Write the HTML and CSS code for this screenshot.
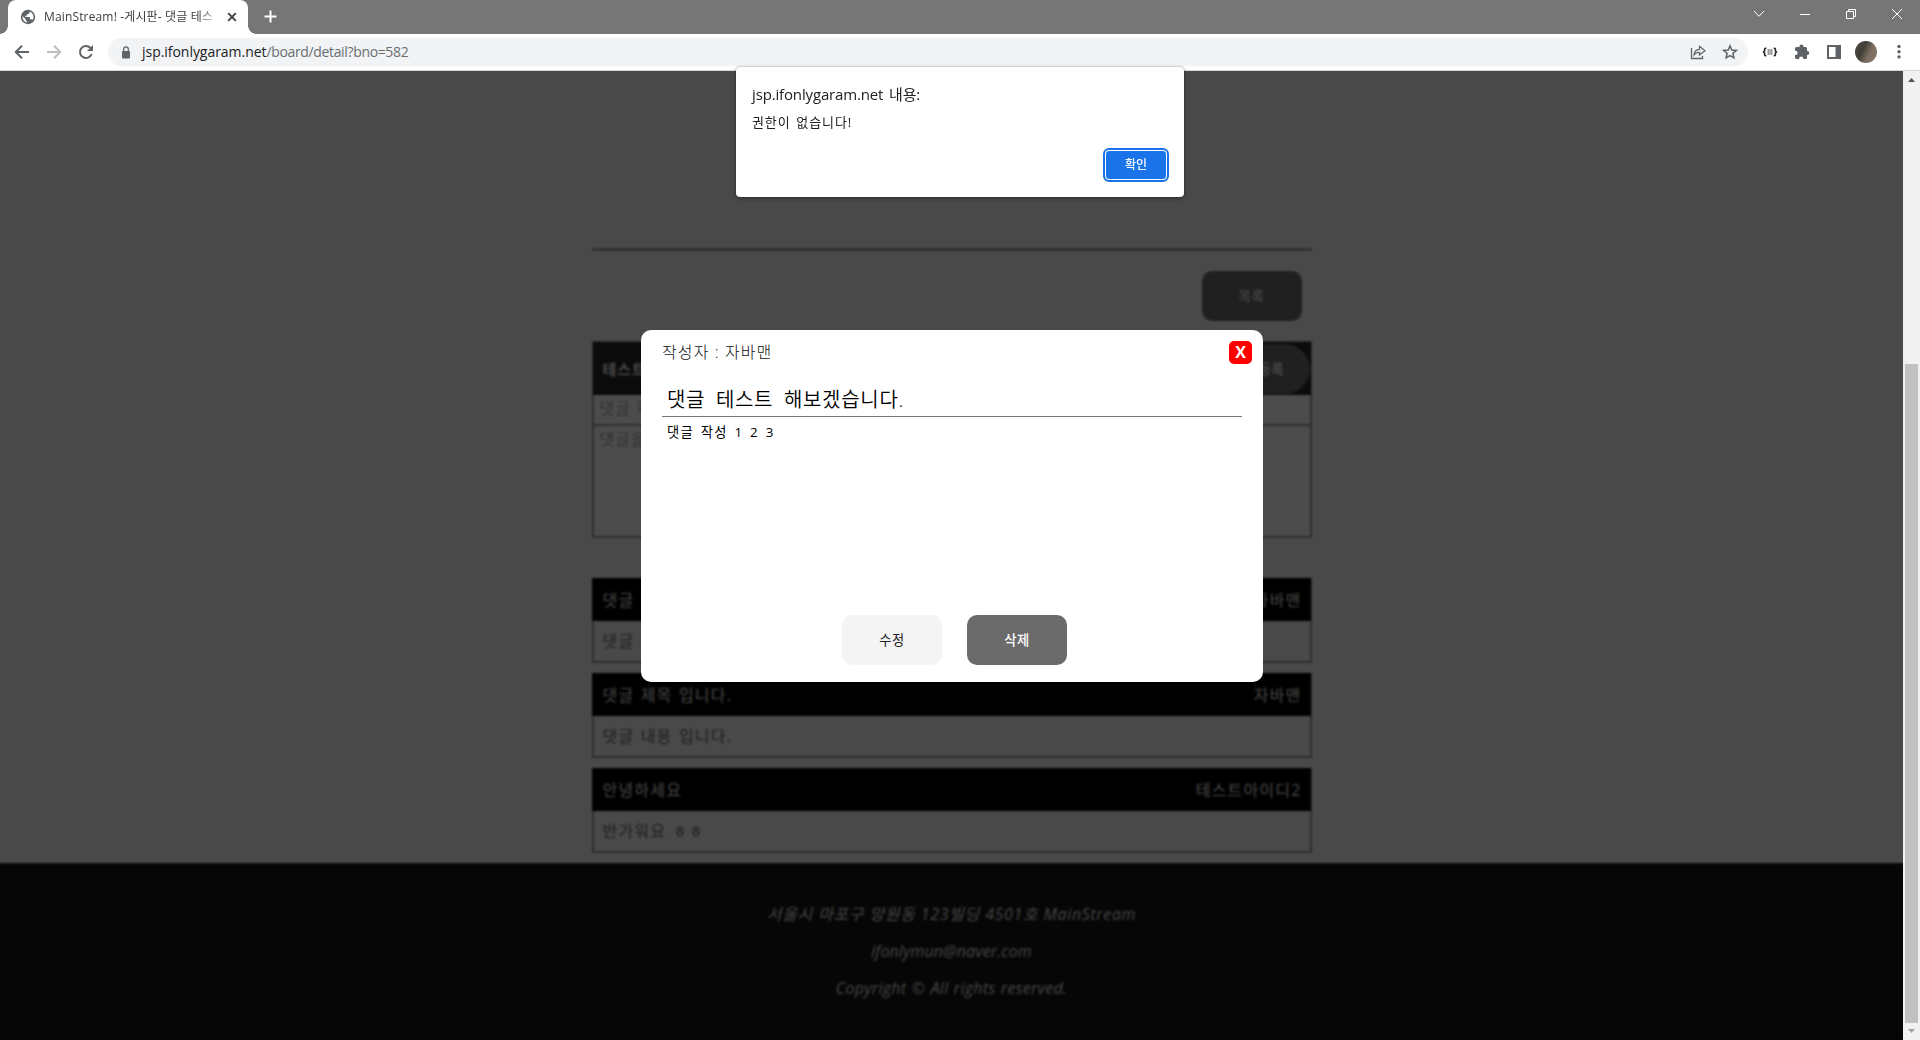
FILE: index.html
```html
<!DOCTYPE html>
<html lang="ko">
<head>
<meta charset="utf-8">
<title>MainStream! -게시판- 댓글 테스트</title>
<link rel="stylesheet" href="styles.css">
</head>
<body>
<div class="browser">
  <header class="tabstrip">
    <div class="tab">
      <svg class="globe" width="16" height="16" viewBox="0 0 16 16"><circle cx="8" cy="8" r="7.200" fill="#5f6368"/><path d="M9.300 2.600 9.600 4 8.200 5.200H6.800V6.800H5.300V8H9Q10 8 10 9V10.200H11.200Q12 10.300 12.300 11C13.200 9.900 13.600 9 13.600 8 13.600 5.500 11.800 3.300 9.300 2.600ZM2.500 7.100 5.700 10.200V11Q5.800 12.200 7.200 12.300V13.500C4.500 13.200 2.300 10.800 2.500 7.100Z" fill="#fff"/></svg>
      <span class="tab-title">MainStream! -게시판- 댓글 테스</span>
      <svg class="tab-close" width="10" height="10" viewBox="0 0 10 10"><path d="M1.200 1.200 8.800 8.800M8.800 1.200 1.200 8.800" stroke="#3c4043" stroke-width="1.900"/></svg>
    </div>
    <svg class="new-tab" width="13" height="13" viewBox="0 0 13 13"><path d="M6.500 .5V12.500M.5 6.500H12.500" stroke="#fff" stroke-width="2"/></svg>
    <div class="window-controls">
      <svg width="12" height="12" viewBox="0 0 12 12"><path d="M1 3 6 8.300 11 3"/></svg>
      <svg width="12" height="12" viewBox="0 0 12 12"><path d="M1 6.500H11"/></svg>
      <svg width="12" height="12" viewBox="0 0 12 12"><path d="M1.500 3.500H8.500V10.500H1.500ZM3.500 3.500V1.500H10.500V8.500H8.500"/></svg>
      <svg width="12" height="12" viewBox="0 0 12 12"><path d="M1 1 11 11M11 1 1 11"/></svg>
    </div>
  </header>
  <nav class="toolbar">
    <svg class="nav-icon" width="16" height="16" viewBox="0 0 16 16"><path d="M15 8H2M8 1.800 1.800 8 8 14.200" fill="none" stroke="#5f6368" stroke-width="2"/></svg>
    <svg class="nav-icon" width="16" height="16" viewBox="0 0 16 16"><path d="M1 8H14M8 1.800 14.200 8 8 14.200" fill="none" stroke="#bcbec1" stroke-width="2"/></svg>
    <svg class="nav-icon" width="16" height="16" viewBox="0 0 16 16"><path d="M13.600 10A6 6 0 1 1 12.300 3.800L13.500 5" fill="none" stroke="#5f6368" stroke-width="2"/><path d="M15 1V7H9Z" fill="#5f6368"/></svg>
    <div class="address">
      <svg width="10" height="13" viewBox="0 0 10 13"><rect x="1" y="5" width="8" height="7.500" rx="1" fill="#5f6368"/><path d="M2.700 5V3.200a2.300 2.300 0 0 1 4.600 0V5" fill="none" stroke="#5f6368" stroke-width="1.300"/></svg>
      <span class="url"><b>jsp.ifonlygaram.net</b>/board/detail?bno=582</span>
      <svg class="share" width="16" height="16" viewBox="0 0 16 16"><path d="M1.500 4V14.500H12.500V12" fill="none" stroke="#5f6368" stroke-width="1.300"/><path d="M4 11C4.200 7.500 6 5.500 9.500 5.300V2.300L15 6.700 9.500 11V8.300C7 8.300 5.200 9.200 4 11Z" fill="none" stroke="#5f6368" stroke-width="1.200"/></svg>
      <svg width="16" height="16" viewBox="0 0 16 16"><path d="M8 1.800 9.800 6 14.300 6.400 10.900 9.400 11.900 13.800 8 11.500 4.100 13.800 5.100 9.400 1.700 6.400 6.200 6Z" fill="none" stroke="#5f6368" stroke-width="1.500"/></svg>
    </div>
    <svg class="ext-icon" width="16" height="16" viewBox="0 0 16 16"><path d="M4.300 4.200H3.500Q2.600 4.200 2.600 5.200V7L1.600 8 2.600 9V10.800Q2.600 11.800 3.500 11.800H4.300M11.700 4.200H12.500Q13.400 4.200 13.400 5.200V7L14.400 8 13.400 9V10.800Q13.400 11.800 12.500 11.800H11.700" fill="none" stroke="#222" stroke-width="1.600"/><path d="M5.500 6H10.500M5.500 8H10.500M5.500 10H10.500" stroke="#333" stroke-width="1.200" stroke-dasharray="2.200 .6"/></svg>
    <svg class="ext-icon" width="16" height="16" viewBox="0 0 16 16"><path d="M1 4.500Q1 3 2.500 3H5.500V2.600a2 2 0 0 1 4 0V3H11.500Q13 3 13 4.500V7H13.300a2 2 0 0 1 0 4H13V13.500Q13 15 11.500 15H9.300V14.500a2 2 0 0 0-4.200 0V15H2.500Q1 15 1 13.500V11H1.500a2.100 2.100 0 0 0 0-4.200H1Z" fill="#5f6368"/></svg>
    <svg class="ext-icon" width="16" height="16" viewBox="0 0 16 16"><path d="M1 1H15V15H1ZM3 3V13H9.500V3Z" fill="#5f6368" fill-rule="evenodd"/></svg>
    <span class="avatar"></span>
    <svg class="menu-dots" width="4" height="16" viewBox="0 0 4 16" fill="#5f6368"><circle cx="2" cy="2.500" r="1.700"/><circle cx="2" cy="7.700" r="1.700"/><circle cx="2" cy="12.900" r="1.700"/></svg>
  </nav>
  <div class="viewport">
    <div class="page">
      <main class="board">
        <hr class="divider">
        <div class="list-row"><button class="btn btn-list">목록</button></div>
        <form class="reply-form">
          <div class="reply-head"><b>테스트</b><button type="button" class="btn-register">등록</button></div>
          <div class="reply-title">댓글 제목</div>
          <div class="reply-body">댓글을</div>
        </form>
        <section class="comments">
          <article class="comment"><h3><span>댓글 테스트</span><span>자바맨</span></h3><p>댓글 작성</p></article>
          <article class="comment"><h3><span>댓글 제목 입니다.</span><span>자바맨</span></h3><p>댓글 내용 입니다.</p></article>
          <article class="comment"><h3><span>안녕하세요</span><span>테스트아이디2</span></h3><p>반가워요 ㅎㅎ</p></article>
        </section>
      </main>
      <footer class="footer">
        <p class="addr">서울시 마포구 망원동 123빌딩 4501호 MainStream</p>
        <p class="mail">ifonlymun@naver.com</p>
        <p class="copy">Copyright © All rights reserved.</p>
      </footer>
      <div class="overlay"></div>
      <div class="modal">
        <div class="modal-head"><span class="author">작성자 : 자바맨</span><button class="close">X</button></div>
        <div class="modal-title">댓글 테스트 해보겠습니다.</div>
        <div class="modal-body">댓글 작성 1 2 3</div>
        <div class="modal-actions"><button class="btn edit">수정</button><button class="btn delete">삭제</button></div>
      </div>
    </div>
    <div class="scrollbar">
      <svg width="17" height="17" viewBox="0 0 17 17"><path d="M5 11 8.500 7 12 11Z" fill="#505050"/></svg>
      <div class="track"><div class="thumb"></div></div>
      <svg width="17" height="17" viewBox="0 0 17 17"><path d="M5 6 8.500 10 12 6Z" fill="#a3a3a3"/></svg>
    </div>
  </div>
  <div class="alert">
    <div class="alert-title">jsp.ifonlygaram.net 내용:</div>
    <div class="alert-text">권한이 없습니다!</div>
    <button class="alert-ok">확인</button>
  </div>
</div>
</body>
</html>
```
FILE: styles.css
```css
* { box-sizing: border-box; }
body {
  margin: 0;
  font-family: "Open Sans", "Noto Sans CJK KR", sans-serif;
  font-size: 16px;
  overflow: hidden;
}
button { font-family: inherit; border: 0; padding: 0; }
svg { display: block; flex: none; }
.browser { position: relative; width: 1920px; height: 1040px; display: flex; flex-direction: column; }

/* window frame */
.tabstrip { height: 34px; background: #767676; display: flex; padding-left: 8px; flex: none; }
.tab {
  position: relative; width: 240px; height: 34px; background: #fff; border-radius: 8px 8px 0 0;
  display: flex; align-items: center; padding: 0 11px 0 12px;
}
.tab::before, .tab::after { content: ""; position: absolute; bottom: 0; width: 8px; height: 8px; }
.tab::before { left: -8px; background: radial-gradient(circle at 0 0, transparent 7.500px, #fff 8px); }
.tab::after { right: -8px; background: radial-gradient(circle at 100% 0, transparent 7.500px, #fff 8px); }
.tab-title {
  width: 176px; margin: 0 8px; font-size: 12px; line-height: 18px; color: #3c4043;
  white-space: nowrap; letter-spacing: .15px;
  -webkit-mask-image: linear-gradient(90deg, #000 155px, transparent 176px);
  mask-image: linear-gradient(90deg, #000 155px, transparent 176px);
}
.new-tab { margin: 10px 0 0 16px; }
.window-controls { margin-left: auto; display: flex; gap: 34px; padding: 8px 17px 0 0; }
.window-controls path { fill: none; stroke: #fff; stroke-width: 1; }

.toolbar { height: 37px; background: #fff; border-bottom: 1px solid #d5d7da; display: flex; align-items: center; padding: 0 19px 0 14px; flex: none; }
.nav-icon { margin-right: 16px; }
.nav-icon:nth-child(3) { margin-right: 14px; }
.address { flex: 1; height: 28px; border-radius: 14px; background: #f1f3f4; display: flex; align-items: center; padding: 0 10px 0 13px; margin-right: 14px; }
.url { margin-left: 11px; font-size: 14px; line-height: 20px; color: #6a6d72; letter-spacing: -.35px; }
.url b { font-weight: 400; color: #202124; letter-spacing: -.04px; }
.share { margin: 0 16px 0 auto; }
.ext-icon { margin-right: 16px; }
.avatar { width: 22px; height: 22px; border-radius: 50%; background: linear-gradient(115deg, #514e44, #3f3e36 35%, #7d7063 65%, #84776b); margin: 0 20px 0 -3px; }

/* page */
.viewport { flex: 1; display: flex; min-height: 0; }
.page { position: relative; width: 1903px; background: #494949; overflow: hidden; display: flex; flex-direction: column; }
.board { width: 720px; height: 792px; margin: 0 auto; padding-top: 177px; flex: none; }
.divider { margin: 0; border: 0; height: 3px; background: #303030; }
.btn { width: 100px; height: 50px; border-radius: 10px; font-size: 13.300px; letter-spacing: .5px; padding-bottom: 1px; }
.list-row { display: flex; justify-content: flex-end; padding: 20px 10px 20px 0; }
.btn-list { background: #202020; color: #484848; font-weight: 500; }
.reply-form { height: 197px; border: 2px solid #2d2d2d; background: #4c4c4c; display: flex; flex-direction: column; letter-spacing: 1px; color: #303030; }
.reply-head { height: 53px; margin: -1px -1px 0; padding: 0 1px 0 10px; background: #0b0b0b; color: #4a4a4a; display: flex; align-items: center; justify-content: space-between; font-size: 15px; }
.btn-register { width: 76px; height: 50px; border-radius: 25px; background: #202020; color: #484848; font-size: 13.300px; font-weight: 700; letter-spacing: .5px; }
.reply-title { height: 31px; border-bottom: 2px solid #2d2d2d; padding: 1px 6px; line-height: 24px; }
.reply-body { padding: 1px 6px; line-height: 24px; }
.comments { margin-top: 40px; display: flex; flex-direction: column; gap: 10px; }
.comment { height: 85px; border: 2px solid #2d2d2d; border-top: 0; letter-spacing: 1.200px; }
.comment h3 { margin: 0 -1px 0 -2px; padding: 0 9px 1px 11px; height: 43px; background: #000; color: #4b4b4b; font-size: 16px; font-weight: 400; display: flex; align-items: center; justify-content: space-between; word-spacing: 1px; }
.comment p { margin: 0; padding: 0 9px; line-height: 40px; color: #1c1c1c; word-spacing: 1px; }
.footer { flex: 1; background: #060606; color: #474747; font-style: italic; text-align: center; padding-top: 39px; }
.footer p { margin: 0 0 13px; line-height: 24px; }
.footer .addr { letter-spacing: .63px; word-spacing: .5px; }
.mail, .copy { font-weight: 500; }
.mail { letter-spacing: .1px; }
.copy { letter-spacing: .25px; word-spacing: 1px; }
.overlay { position: absolute; inset: 0; -webkit-backdrop-filter: blur(1.200px); backdrop-filter: blur(1.200px); }

/* comment dialog */
.modal { position: absolute; left: 641px; top: 259px; width: 622px; height: 352px; background: #fff; border-radius: 10px; padding: 11px 21px 17px; display: flex; flex-direction: column; }
.modal-head { display: flex; justify-content: space-between; margin-right: -10px; height: 23px; align-items: center; }
.author { letter-spacing: 1.100px; color: #111; font-weight: 300; padding-bottom: 3px; }
.close { width: 23px; height: 23px; border-radius: 5px; background: #f00; color: #fff; font-weight: 700; font-size: 16px; line-height: 23px; }
.modal-title { margin-top: 22px; height: 31px; border-bottom: 1px solid #767676; padding-left: 5px; font-size: 20px; line-height: 28px; letter-spacing: .7px; word-spacing: 4.800px; color: #000; font-weight: 350; }
.modal-body { flex: 1; padding: 5px; font-size: 13.300px; line-height: 20px; letter-spacing: 1.200px; word-spacing: 2.200px; color: #000; }
.modal-actions { display: flex; gap: 25px; justify-content: center; padding-left: 5px; }
.edit { background: #f4f4f4; color: #222; }
.delete { background: #6b6b6b; color: #fff; font-weight: 500; }

.scrollbar { width: 17px; background: #f1f1f1; display: flex; flex-direction: column; }
.track { flex: 1; padding: 276px 2px 0; }
.thumb { height: 659px; background: #c1c1c1; }

/* script alert */
.alert { position: absolute; left: 736px; top: 67px; width: 448px; height: 130px; background: #fff; border-radius: 4px; box-shadow: 0 0 2px rgba(0,0,0,.5), 0 2px 5px rgba(0,0,0,.25); padding: 16px; display: flex; flex-direction: column; }
.alert-title { font-size: 15px; line-height: 22px; color: #202124; letter-spacing: -.15px; word-spacing: 2px; }
.alert-text { margin-top: 7px; font-size: 13px; line-height: 20px; color: #202124; letter-spacing: .9px; word-spacing: 1.500px; }
.alert-ok { align-self: flex-end; width: 62px; height: 30px; margin: 18px 1px 0 0; background: #1a73e8; color: #fff; border-radius: 4px; font-size: 12px; font-weight: 500; border: 1px solid #fff; outline: 2px solid #1a73e8; padding-bottom: 2px; }
```
